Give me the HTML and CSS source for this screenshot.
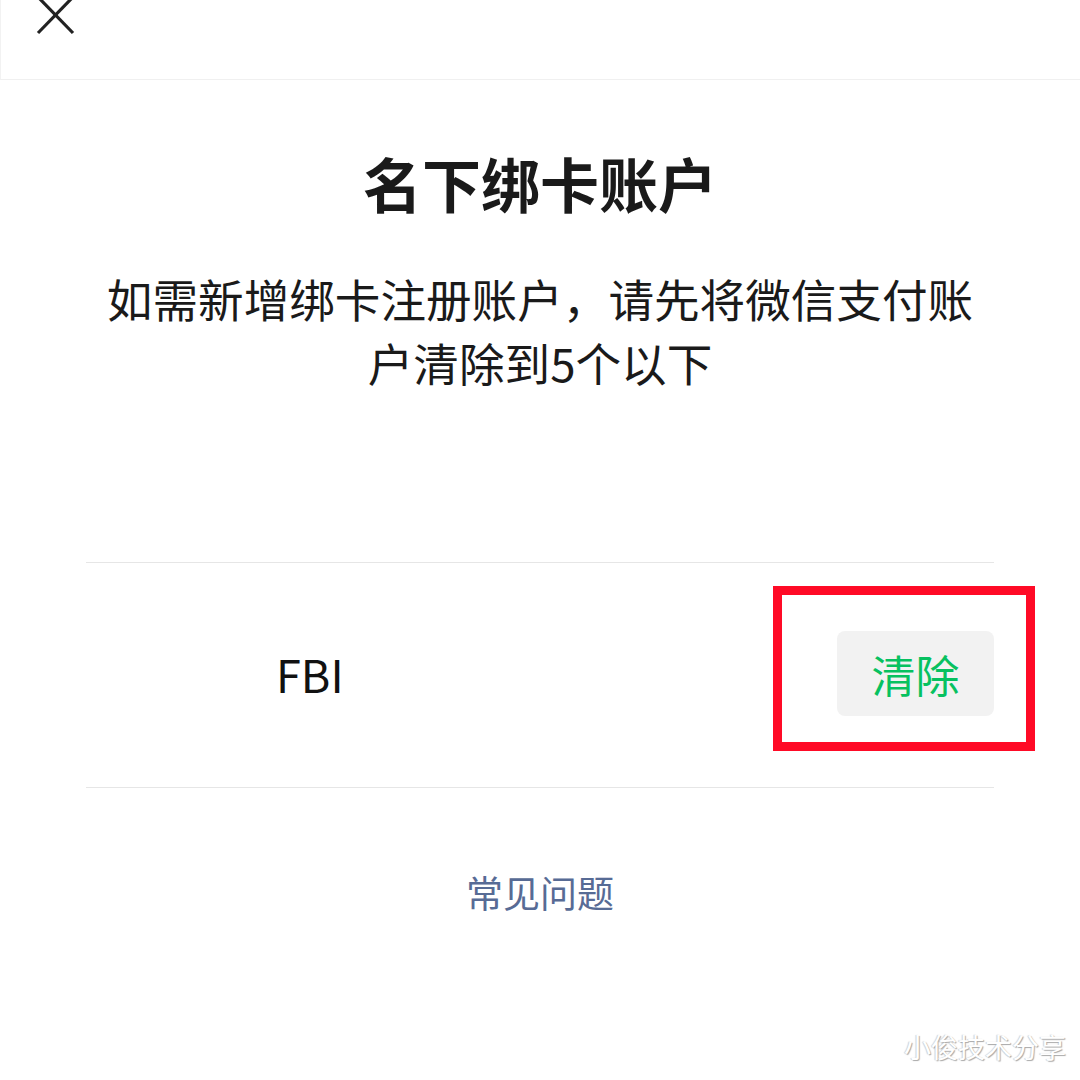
FILE: index.html
```html
<!DOCTYPE html>
<html lang="zh-CN">
<head>
    <meta charset="UTF-8">
    <meta name="viewport" content="width=device-width, initial-scale=1.0">
    <title>名下绑卡账户</title>
    <link rel="stylesheet" href="styles.css">
</head>
<body>
    <div class="page">
        <div class="top-bar">
            <svg class="close-icon" width="90" height="80" viewBox="0 0 90 80">
                <line x1="37" y1="-3" x2="72" y2="33" />
                <line x1="72" y1="-3" x2="37" y2="33" />
            </svg>
        </div>
        <div class="content">
            <h1 class="title">名下绑卡账户</h1>
            <p class="desc">如需新增绑卡注册账户，请先将微信支付账户清除到5个以下</p>
            <div class="account-list">
                <div class="account-row">
                    <span class="account-name">FBI</span>
                    <div class="highlight-wrap">
                        <button class="clear-btn">清除</button>
                        <div class="highlight-box"></div>
                    </div>
                </div>
            </div>
            <a class="faq-link">常见问题</a>
        </div>
        <div class="watermark">小俊技术分享</div>
    </div>
</body>
</html>
```

FILE: styles.css
```css
body {
    margin: 0;
    background: #ffffff;
    font-family: "Noto Sans CJK SC", "Noto Sans", sans-serif;
    color: #111111;
}
.page {
    position: relative;
    width: 1080px;
    height: 1080px;
    overflow: hidden;
}
.top-bar {
    height: 80px;
    border-bottom: 1px solid #f0f0f0;
    border-left: 1px solid #f2f2f2;
    box-sizing: border-box;
}
.close-icon {
    display: block;
}
.close-icon line {
    stroke: #222222;
    stroke-width: 3.2;
}
.content {
    padding: 0 86px;
    display: flex;
    flex-direction: column;
    align-items: center;
}
.title {
    margin: 73px 0 0;
    font-size: 59px;
    line-height: 59px;
    font-weight: 700;
    color: #1a1a1a;
}
.desc {
    margin: 54px 0 0;
    width: 890px;
    font-size: 45.6px;
    line-height: 64px;
    text-align: center;
    color: #1a1a1a;
}
.account-list {
    margin-top: 168px;
    width: 100%;
}
.account-row {
    height: 224px;
    border-top: 1px solid #e6e6e6;
    border-bottom: 1px solid #e6e6e6;
    display: flex;
    align-items: center;
    justify-content: space-between;
    padding-left: 190px;
}
.account-name {
    font-size: 45px;
    line-height: 45px;
    margin-top: -4px;
    color: #111111;
}
.highlight-wrap {
    position: relative;
    margin-top: -3px;
}
.clear-btn {
    width: 157px;
    height: 85px;
    border: none;
    border-radius: 8px;
    background: #f2f2f2;
    color: #07c160;
    font-family: inherit;
    font-size: 44px;
    padding: 0;
    display: flex;
    align-items: center;
    justify-content: center;
}
.highlight-box {
    position: absolute;
    top: -45px;
    left: -64px;
    right: -41px;
    bottom: -35px;
    border: 9px solid #ff0a26;
}
.faq-link {
    margin-top: 84px;
    font-size: 37px;
    line-height: 40px;
    color: #576b95;
}
.watermark {
    position: absolute;
    right: 14px;
    bottom: 14px;
    font-size: 27px;
    color: #ffffff;
    text-shadow: 1px 1px 1px #a8a8a8, -1px 0 1px #d0d0d0;
}
```
